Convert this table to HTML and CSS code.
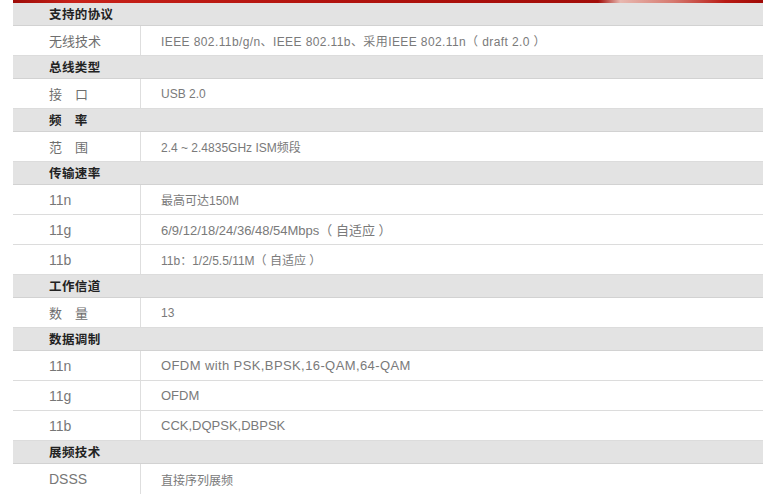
FILE: index.html
```html
<!DOCTYPE html>
<html lang="zh-CN">
<head>
<meta charset="utf-8">
<title>参数</title>
<link rel="stylesheet" href="styles.css">
</head>
<body>
<div class="spec">
  <div class="topbar"></div>
  <div class="hd">支持的协议</div>
  <div class="row"><div class="k">无线技术</div><div class="v sm wide">IEEE 802.11b/g/n、IEEE 802.11b、采用IEEE 802.11n（ draft 2.0 ）</div></div>
  <div class="hd">总线类型</div>
  <div class="row"><div class="k">接　口</div><div class="v sm">USB 2.0</div></div>
  <div class="hd">频　率</div>
  <div class="row"><div class="k">范　围</div><div class="v sm">2.4 ~ 2.4835GHz ISM频段</div></div>
  <div class="hd">传输速率</div>
  <div class="row"><div class="k en">11n</div><div class="v sm">最高可达150M</div></div>
  <div class="row"><div class="k en">11g</div><div class="v">6/9/12/18/24/36/48/54Mbps（ 自适应 ）</div></div>
  <div class="row"><div class="k en">11b</div><div class="v sm">11b：1/2/5.5/11M（ 自适应 ）</div></div>
  <div class="hd">工作信道</div>
  <div class="row"><div class="k">数　量</div><div class="v sm">13</div></div>
  <div class="hd">数据调制</div>
  <div class="row"><div class="k en">11n</div><div class="v wide">OFDM with PSK,BPSK,16-QAM,64-QAM</div></div>
  <div class="row"><div class="k en">11g</div><div class="v">OFDM</div></div>
  <div class="row"><div class="k en">11b</div><div class="v">CCK,DQPSK,DBPSK</div></div>
  <div class="hd">展频技术</div>
  <div class="row"><div class="k en">DSSS</div><div class="v sm">直接序列展频</div></div>
</div>
</body>
</html>
```
FILE: styles.css
```css
html, body {
  margin: 0;
  padding: 0;
  background: #fff;
}
body {
  font-family: "Liberation Sans", Arial, "Noto Sans CJK SC", sans-serif;
  overflow: hidden;
}
.spec {
  width: 750px;
  margin-left: 13px;
  display: flex;
  flex-direction: column;
}
.topbar {
  height: 3px;
  background: linear-gradient(90deg, #9e0c08 0%, #c8221a 8%, #b3140f 40%, #a30d09 78%, #e8b8b0 81%, #d67a70 88%, #b81a14 95%, #a00a06 100%);
}
.hd {
  height: 22px;
  line-height: 22px;
  background: #e3e3e3;
  border-bottom: 1px solid #d2d2d2;
  padding-left: 36px;
  font-family: "Noto Sans CJK SC", sans-serif;
  font-weight: bold;
  font-size: 12.5px;
  color: #222;
  letter-spacing: 0.4px;
}
.row {
  display: grid;
  grid-template-columns: 128px 1fr;
  height: 29px;
  border-bottom: 1px solid #dcdcdc;
}
.row:last-child {
  border-bottom: none;
  height: 30px;
}
.k {
  border-right: 1px solid #dedede;
  padding-left: 36px;
  display: flex;
  align-items: center;
  font-family: "Noto Sans CJK SC", sans-serif;
  font-size: 13px;
  color: #6e6e6e;
}
.k.en {
  font-family: "Liberation Sans", Arial, sans-serif;
  font-size: 14px;
  color: #777;
}
.v {
  padding-left: 20px;
  display: flex;
  align-items: center;
  font-size: 13px;
  color: #7a7a7a;
  white-space: pre;
}
.v.sm {
  font-size: 12px;
}
.v.wide {
  letter-spacing: 0.4px;
}
```
